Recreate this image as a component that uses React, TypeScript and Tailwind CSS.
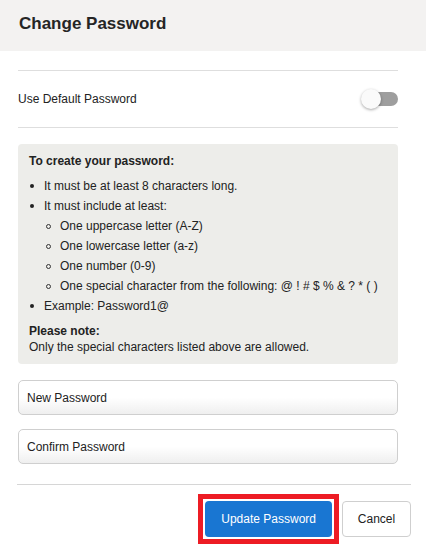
import React from "react";

const outer = [
  "It must be at least 8 characters long.",
  "It must include at least:",
];
const inner = [
  "One uppercase letter (A-Z)",
  "One lowercase letter (a-z)",
  "One number (0-9)",
  "One special character from the following: @ ! # $ % & ? * ( )",
];

function Dot() {
  return (
    <span className="w-[15px] shrink-0 flex items-center">
      <span className="block w-[4px] h-[4px] rounded-full bg-[#222] ml-[1px]" />
    </span>
  );
}
function Circle() {
  return (
    <span className="w-[16px] shrink-0 flex items-center">
      <span className="block w-[5px] h-[5px] rounded-full border border-[#333] ml-[2px]" />
    </span>
  );
}

export default function App() {
  return (
    <div
      className="w-[426px] h-[553px] bg-white flex flex-col text-[#222] overflow-hidden"
      style={{ fontFamily: '"Liberation Sans", Arial, sans-serif' }}
    >
      <div className="h-[51px] shrink-0 bg-[#f3f2f1] pl-[19px] flex items-center pb-[3px]">
        <h1 className="text-[17px] font-bold leading-[20px] text-[#252525]">Change Password</h1>
      </div>

      <div className="pl-[18px] pr-[28px] pt-[19px]">
        <div className="border-t border-[#dedede] h-[57px] flex items-center justify-between">
          <span className="text-[12px] leading-[16px]">Use Default Password</span>
          <div className="relative w-[37px] h-[20px] flex items-center justify-end">
            <div className="w-[34px] h-[14px] rounded-full bg-[#9e9e9e]" />
            <div className="absolute left-[0px] top-0 w-[20px] h-[20px] rounded-full bg-[#fafafa] shadow-[0_1px_3px_rgba(0,0,0,0.35)]" />
          </div>
        </div>
        <div className="border-t border-[#dedede]" />

        <div className="mt-[16px] h-[220px] bg-[#ededea] rounded-[4px] pl-[11px] pr-[8px] pt-[9px] text-[12px]">
          <div className="font-bold leading-[16px]">To create your password:</div>
          <ul className="mt-[7px]">
            {outer.map((t) => (
              <li key={t} className="flex leading-[20px]">
                <Dot />
                <span>{t}</span>
              </li>
            ))}
            {inner.map((t) => (
              <li key={t} className="flex leading-[20px] pl-[15px]">
                <Circle />
                <span>{t}</span>
              </li>
            ))}
            <li className="flex leading-[20px]">
              <Dot />
              <span>Example: Password1@</span>
            </li>
          </ul>
          <div className="mt-[7px] font-bold leading-[16px]">Please note:</div>
          <div className="leading-[16px]">Only the special characters listed above are allowed.</div>
        </div>

        <div className="mt-[16px] h-[35px] rounded-[5px] border border-[#cfcfcf] bg-linear-to-b from-white from-50% to-[#efefef] flex items-center pl-[8px] text-[12px]">
          New Password
        </div>
        <div className="mt-[14px] h-[35px] rounded-[5px] border border-[#cfcfcf] bg-linear-to-b from-white from-50% to-[#efefef] flex items-center pl-[8px] text-[12px]">
          Confirm Password
        </div>
      </div>

      <div className="mt-[20px] ml-[17px] mr-[15px] border-t border-[#d6d6d6] pt-[16px] flex justify-end items-start gap-[10px]">
        <div className="-m-[7px] border-[5px] border-[#ed1c24] p-[2px] flex">
          <button className="h-[36px] px-[16px] rounded-[4px] bg-[#1976d2] text-white text-[12px]">
            Update Password
          </button>
        </div>
        <button className="h-[36px] w-[69px] rounded-[4px] border border-[#cfcfcf] bg-white text-[12px] text-[#222]">
          Cancel
        </button>
      </div>
    </div>
  );
}
